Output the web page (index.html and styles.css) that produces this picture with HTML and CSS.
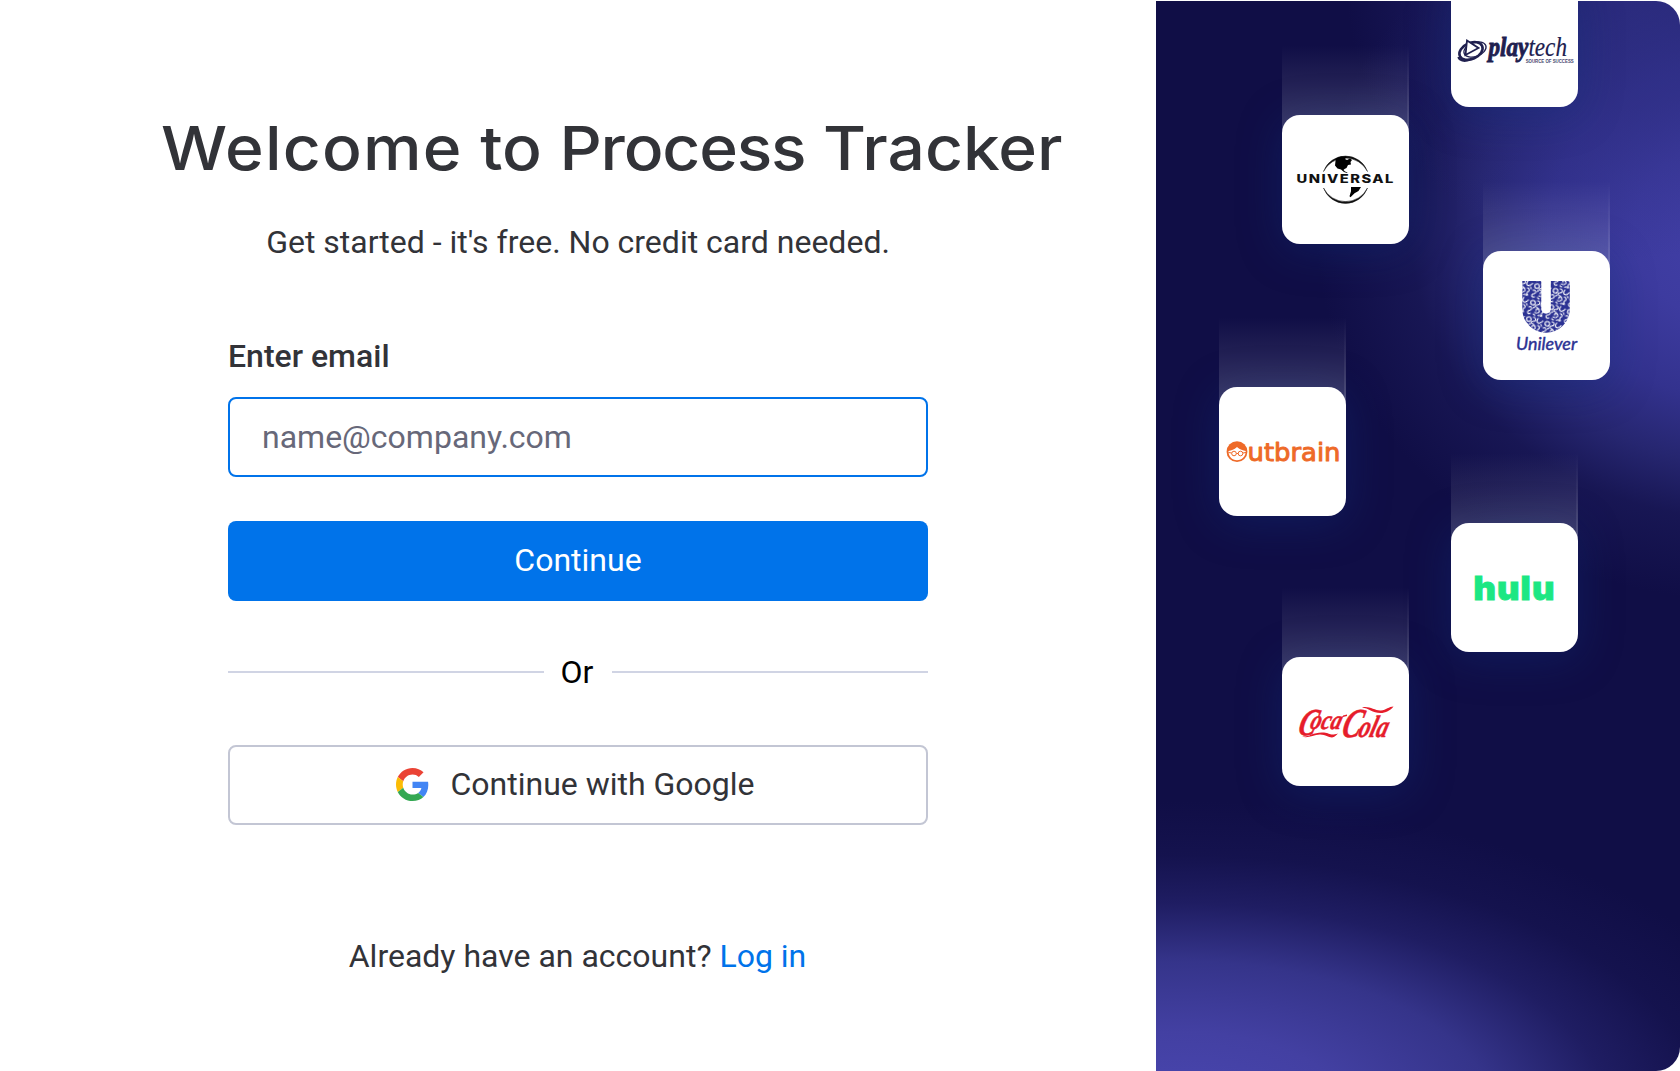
FILE: index.html
```html
<!DOCTYPE html>
<html lang="en">
<head>
<meta charset="utf-8">
<title>Process Tracker</title>
<link rel="stylesheet" href="styles.css">
</head>
<body>
<div class="page">
  <main class="signup">
    <h1 class="title"><span class="title-loose">Welcome</span> to <span class="title-tight">Process</span> Tracker</h1>
    <p class="subtitle">Get started - it's free. No credit card needed.</p>
    <form class="form">
      <label class="label" for="email">Enter email</label>
      <input class="input" id="email" type="email" placeholder="name@company.com">
      <button class="btn btn-primary" type="button">Continue</button>
      <div class="divider"><span class="divider-text">Or</span></div>
      <button class="btn btn-google" type="button">
        <svg class="google-icon" viewBox="0 0 48 48">
          <path fill="#EA4335" d="M24 9.5c3.54 0 6.71 1.22 9.21 3.6l6.85-6.85C35.9 2.38 30.47 0 24 0 14.62 0 6.51 5.38 2.56 13.22l7.98 6.19C12.43 13.72 17.74 9.5 24 9.5z"/>
          <path fill="#4285F4" d="M46.98 24.55c0-1.57-.15-3.09-.38-4.55H24v9.02h12.94c-.58 2.96-2.26 5.48-4.78 7.18l7.73 6c4.51-4.18 7.09-10.36 7.09-17.65z"/>
          <path fill="#FBBC05" d="M10.53 28.59c-.48-1.45-.76-2.99-.76-4.59s.27-3.14.76-4.59l-7.98-6.19C.92 16.46 0 20.12 0 24s.92 7.54 2.56 10.78l7.97-6.19z"/>
          <path fill="#34A853" d="M24 48c6.48 0 11.93-2.13 15.89-5.81l-7.73-6c-2.15 1.45-4.92 2.3-8.16 2.3-6.26 0-11.57-4.22-13.47-9.91l-7.98 6.19C6.51 42.62 14.62 48 24 48z"/>
        </svg>
        <span>Continue with Google</span>
      </button>
    </form>
    <p class="login">Already have an account? <a class="login-link" href="#">Log in</a></p>
  </main>

  <aside class="showcase">
    <div class="tile tile-playtech">
      <svg class="logo" viewBox="0 0 127 129">
        <g fill="none" stroke="#20204f">
          <ellipse cx="20" cy="73" rx="12.2" ry="8" stroke-width="2.6" transform="rotate(-24 20 73)"/>
          <ellipse cx="24" cy="71.5" rx="11.5" ry="7" stroke-width="1.3" transform="rotate(-20 24 71.5)"/>
          <path d="M16 62.5 L27.5 70 L14.5 77 Z" fill="#fff" stroke-width="1.8"/>
          <path d="M7.5 79c1 3.5 6 4.5 10 3" stroke-width="2.4"/>
        </g>
        <text x="37.5" y="77.5" class="logo-serif" font-size="28" fill="#20204f" stroke="#20204f" stroke-width=".9" textLength="78.5" lengthAdjust="spacingAndGlyphs"><tspan font-weight="700">play</tspan><tspan stroke-width=".2">tech</tspan></text>
        <text x="74.7" y="84.6" font-family="Liberation Sans, sans-serif" font-size="5" font-weight="700" fill="#4a4a70" textLength="48" lengthAdjust="spacingAndGlyphs">SOURCE OF SUCCESS</text>
      </svg>
    </div>
    <div class="tile tile-universal">
      <svg class="logo" viewBox="0 0 127 129">
        <path d="M41.5 56.5A23.4 23.4 0 0 1 85.5 56.5A24.5 24 0 0 0 41.5 56.5z M41.5 73A23.4 23.4 0 0 0 85.5 73A24.5 24.3 0 0 1 41.5 73z" fill="#111" stroke="#111" stroke-width=".5"/>
        <path d="M54 43.5l5-2 6 .5-2 2 2 1 3-1.5 2 1.5-1.5 2 .5 2.5-3 .5-1.5 3-2 1-1 1 1.5 1.5 2.5 1-.5.5-3-1-3-2.5-3.5-1-2.5-3 .5-4.5z" fill="#000"/>
        <path d="M69 72h10l-2.5 4-4 2.2-4 4-1-1 1.5-5z" fill="#000"/>
        <text class="wordmark-universal" transform="translate(14.5 68.4) scale(1.28 1)">UNIVERSAL</text>
      </svg>
    </div>
    <div class="tile tile-unilever">
      <svg class="logo" viewBox="0 0 127 129">
        <defs>
          <pattern id="curls" width="19" height="17" patternUnits="userSpaceOnUse" patternTransform="rotate(14)">
            <rect width="19" height="17" fill="#2b3193"/>
            <g fill="none" stroke="#fff" stroke-width="1.1" stroke-linecap="round">
              <circle cx="4" cy="4" r="2.3"/>
              <path d="M8 1c3 0 4 3 1 4s-2 3 1 3M13 1c-1 2-1 4 1 4.5s3-1 4-3M1 9c2-1 4 0 3 2s-3 1-3 3 2 2 3 1M9 11c-1-2 2-3 3-1s-1 4-4 3M7 15l2 1M14 8c2 0 3 2 2 3s-2 3 0 4M12 15.5c1-1 2-1 3 0M17 6.5l1 1.5M6.5 8l-1 1"/>
            </g>
          </pattern>
        </defs>
        <path d="M48.8 30V58a14.25 14.25 0 0 0 28.5 0V30" fill="none" stroke="url(#curls)" stroke-width="19"/>
        <text x="33" y="99" font-family="Lato, sans-serif" font-size="17" font-style="italic" font-weight="400" fill="#2b3193" stroke="#2b3193" stroke-width=".4" textLength="61" lengthAdjust="spacingAndGlyphs">Unilever</text>
      </svg>
    </div>
    <div class="tile tile-outbrain">
      <svg class="logo" viewBox="0 0 127 129">
        <circle cx="18" cy="64.7" r="10.4" fill="#ee6a28"/>
        <path d="M9.5 64c3-.3 5.5-1.5 8.5-4 3 2.5 6 3.7 8.7 4 .3 5-3.7 9.3-8.7 9.3S9.2 69 9.5 64z" fill="#fff"/>
        <g fill="none" stroke="#ee6a28" stroke-width="1"><circle cx="15" cy="66.5" r="2.3"/><circle cx="21.5" cy="66.5" r="2.3"/><path d="M17.3 66.5h2M9.5 65.5l3.2.5M27 65.5l-3.2.5"/></g>
        <text x="28.5" y="73.7" font-family="DejaVu Sans, sans-serif" font-size="25.5" fill="#ee6a28" stroke="#ee6a28" stroke-width="1" stroke-linejoin="round" textLength="93" lengthAdjust="spacingAndGlyphs">utbrain</text>
      </svg>
    </div>
    <div class="tile tile-hulu">
      <svg class="logo" viewBox="0 0 127 129">
        <text x="22.5" y="77.3" class="wordmark-hulu" textLength="82" lengthAdjust="spacingAndGlyphs">hulu</text>
      </svg>
    </div>
    <div class="tile tile-coca">
      <svg class="logo" viewBox="0 0 127 129">
        <g class="logo-serif" fill="#e61d2b" stroke="#e61d2b" stroke-width=".5" font-weight="700">
          <text transform="translate(14.5 77.5) skewX(-16)" font-size="38" textLength="18" lengthAdjust="spacingAndGlyphs">C</text>
          <text transform="translate(27 72) skewX(-16)" font-size="27" textLength="31" lengthAdjust="spacingAndGlyphs">oca</text>
          <text transform="translate(58 80) skewX(-16)" font-size="41" textLength="19" lengthAdjust="spacingAndGlyphs">C</text>
          <text transform="translate(75 80) skewX(-16)" font-size="31" textLength="29" lengthAdjust="spacingAndGlyphs">ola</text>
        </g>
        <g fill="#e61d2b">
          <path d="M20 79.5c6 1 12-5 22-4 6 .6 6 3.5 14 1-3 3-5 4-6 4-4 0-6-3-12-3-7 0-12 4.5-18 2z"/>
          <path d="M80 50.5c7-2 13 3.5 19 3 5-.4 8-4 12.5-4-3 4-8 6.5-13 6.5-8 0-12-5-18.5-5.5z"/>
          <path d="M61 58.5l4-1v1.6l-4 1z"/>
        </g>
      </svg>
    </div>
  </aside>
</div>
</body>
</html>
```
FILE: styles.css
```css
* { box-sizing: border-box; }

body {
  margin: 0;
  background: #fff;
  color: #323338;
  font: 400 32px/40px Roboto, sans-serif;
}

.page {
  display: flex;
  height: 1071px;
  overflow: hidden;
}

.signup {
  width: 1156px;
  padding: 100px 160px 0;
}

.title {
  margin: 0;
  font: 500 61px/96px Inter, sans-serif;
  white-space: nowrap;
  transform: translateX(1px) scaleX(1.081);
  transform-origin: left;
}

.title-loose { letter-spacing: 1.1px; }
.title-tight { letter-spacing: -1.1px; }

.subtitle {
  margin: 26px 0 0;
  text-align: center;
}

.form {
  display: flex;
  flex-direction: column;
  width: 700px;
  margin: 74px auto 0;
}

.label {
  font-weight: 500;
}

.input {
  height: 80px;
  margin-top: 21px;
  padding: 0 32px;
  border: 2px solid #0073ea;
  border-radius: 8px;
  outline: none;
  background: #fff;
  font: inherit;
}

.input::placeholder {
  color: #676879;
  opacity: 1;
}

.btn {
  display: flex;
  align-items: center;
  justify-content: center;
  height: 80px;
  padding: 0 0 2px;
  border: 0;
  border-radius: 8px;
  font: inherit;
}

.btn-primary {
  margin-top: 44px;
  background: #0073ea;
  color: #fff;
}

.divider {
  display: flex;
  align-items: center;
  height: 40px;
  margin-top: 51px;
  color: #000;
}

.divider::before,
.divider::after {
  content: "";
  flex: 1;
  height: 2px;
  background: #d0d4e4;
}

.divider-text {
  width: 68px;
  padding-right: 2px;
  text-align: center;
}

.btn-google {
  gap: 21px;
  margin-top: 53px;
  padding-right: 5px;
  border: 2px solid #c3c6d4;
  background: #fff;
  color: #323338;
}

.google-icon {
  width: 33px;
  height: 33px;
}

.login {
  margin: 111px 0 0;
  padding-right: 1px;
  text-align: center;
}

.login-link {
  color: #0073ea;
  text-decoration: none;
}

.showcase {
  position: relative;
  flex: 1;
  margin-top: 1px;
  overflow: hidden;
  border-radius: 0 24px 24px 0;
  background:
    radial-gradient(280px 280px at 470px -20px, rgba(47, 47, 136, .75) 0%, rgba(44, 44, 128, .5) 45%, rgba(30, 30, 100, 0) 100%),
    radial-gradient(430px 370px at 590px 230px, #4340a9 0%, #3d3b9f 26%, #33328e 46%, #262670 63%, rgba(27, 26, 90, .7) 78%, rgba(16, 14, 70, 0) 100%),
    radial-gradient(640px 320px at 20px 1120px, #4a47b2 0%, #4340a2 28%, #35348a 50%, rgba(36, 34, 108, .75) 68%, rgba(27, 25, 90, .4) 83%, rgba(16, 14, 70, 0) 100%),
    #100e46;
}

.tile {
  position: absolute;
  width: 127px;
  height: 129px;
  border-radius: 18px;
  box-shadow: 0 6px 44px rgba(16, 50, 130, .38);
}

.tile::before {
  content: "";
  position: absolute;
  inset: -70px 0 auto;
  height: 90px;
  background:
    linear-gradient(rgba(255, 255, 255, 0), rgba(255, 255, 255, .12)) right / 2px 100% no-repeat,
    linear-gradient(rgba(255, 255, 255, 0), rgba(255, 255, 255, .19));
}

.logo {
  position: relative;
  display: block;
  width: 127px;
  height: 129px;
  border-radius: 18px;
  background: #fff;
}

.logo-serif {
  font-family: "Liberation Serif", serif;
  font-style: italic;
}

.wordmark-universal {
  font: 800 11.5px Inter, sans-serif;
  letter-spacing: 1.15px;
  fill: #111;
}

.wordmark-hulu {
  font: 900 32.5px Inter, sans-serif;
  letter-spacing: 1px;
  fill: #1ce783;
  stroke: #1ce783;
  stroke-width: .8px;
}

.tile-playtech { left: 295px; top: -23px; }
.tile-universal { left: 126px; top: 114px; }
.tile-unilever { left: 327px; top: 250px; }
.tile-outbrain { left: 63px; top: 386px; }
.tile-hulu { left: 295px; top: 522px; }
.tile-coca { left: 126px; top: 656px; }
```
